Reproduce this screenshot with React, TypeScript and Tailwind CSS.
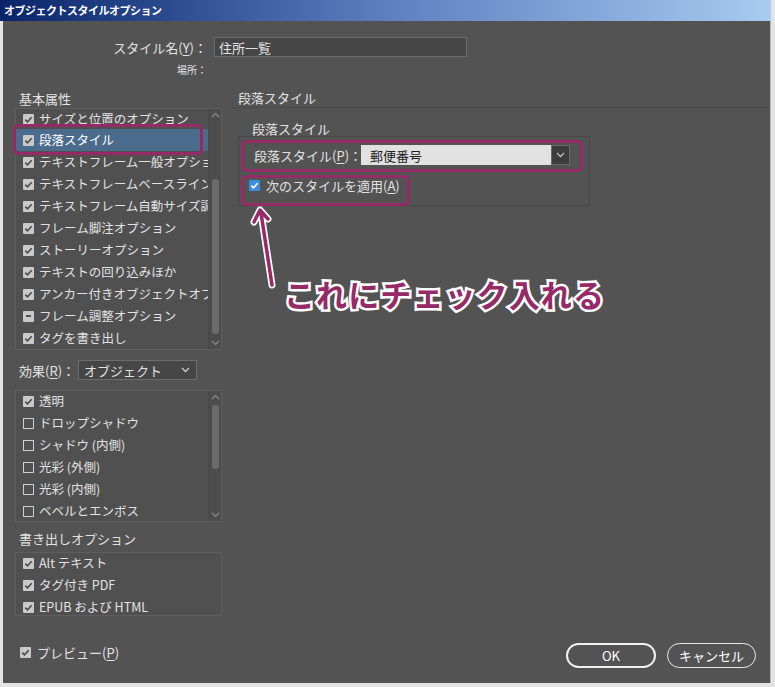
import React from 'react';

type CheckState = 'on' | 'off' | 'mixed' | 'blue';

const Check = ({ state }: { state: CheckState }) => {
  if (state === 'off') {
    return <span className="block w-[11px] h-[11px] shrink-0 border border-[#cfcfcf]" />;
  }
  if (state === 'mixed') {
    return (
      <span className="flex w-[11px] h-[11px] shrink-0 items-center justify-center bg-[#c9c9c9] rounded-[1px]">
        <span className="block w-[5px] h-[2px] bg-[#555]" />
      </span>
    );
  }
  const blue = state === 'blue';
  return (
    <span className={`flex w-[11px] h-[11px] shrink-0 items-center justify-center rounded-[1px] ${blue ? 'bg-[#3b8ede]' : 'bg-[#c9c9c9]'}`}>
      <svg width="11" height="11" viewBox="0 0 11 11">
        <path d="M2.3 5.6 L4.5 7.8 L8.7 3.2" fill="none" stroke={blue ? '#ffffff' : '#4a4a4a'} strokeWidth="1.6" />
      </svg>
    </span>
  );
};

const Row = ({ label, state, selected, h = 'h-[22px]' }: { label: string; state: CheckState; selected?: boolean; h?: string }) => (
  <div className={`flex items-center gap-[5px] pl-[7px] whitespace-nowrap overflow-hidden ${h} ${selected ? 'bg-[#4a6b8b] text-white' : ''}`}>
    <Check state={state} />
    <span>{label}</span>
  </div>
);

const Scrollbar = ({ thumbTop, thumbHeight }: { thumbTop: string; thumbHeight: string }) => (
  <div className="relative w-[13px] shrink-0 border-l border-[#484848] bg-[#4c4c4c]">
    <svg className="absolute top-[3px] left-[2px]" width="9" height="6" viewBox="0 0 9 6">
      <path d="M1 5 L4.5 1.5 L8 5" fill="none" stroke="#8a8a8a" strokeWidth="1.2" />
    </svg>
    <div className={`absolute left-[3px] w-[7px] rounded-[3px] bg-[#6b6b6b] ${thumbTop} ${thumbHeight}`} />
    <svg className="absolute bottom-[3px] left-[2px]" width="9" height="6" viewBox="0 0 9 6">
      <path d="M1 1 L4.5 4.5 L8 1" fill="none" stroke="#8a8a8a" strokeWidth="1.2" />
    </svg>
  </div>
);

const Chevron = ({ color = '#cfcfcf' }: { color?: string }) => (
  <svg width="9" height="6" viewBox="0 0 9 6">
    <path d="M1 1 L4.5 4.5 L8 1" fill="none" stroke={color} strokeWidth="1.3" />
  </svg>
);

const U = ({ children }: { children: React.ReactNode }) => <span className="underline underline-offset-2">{children}</span>;

export default function App() {
  return (
    <div className="w-[775px] h-[687px] bg-[#e4e4e4] flex flex-col text-[#e2e2e2] text-[12.5px] leading-none font-['Noto_Sans_CJK_JP','Noto_Sans',sans-serif]">
      <div className="h-[21px] shrink-0 mr-[4px] flex items-center pl-[4px] bg-linear-to-r from-[#0a246a] via-[#5d7fc0] to-[#a8cbf0] text-white font-bold text-[11px] tracking-[-0.5px]">
        オブジェクトスタイルオプション
      </div>
      <div className="relative flex-1 flex flex-col ml-[3px] mr-[4px] mb-[4px] bg-[#535353] border-r border-[#b8b8b8]">
        <div className="mt-[16px] flex items-center h-[20px]">
          <div className="w-[204px] text-right text-[13px]">
            スタイル名(<U>Y</U>)：
          </div>
          <div className="ml-[7px] w-[253px] h-[20px] flex items-center pl-[4px] bg-[#464646] border border-[#6c6c6c] text-[13px]">
            住所一覧
          </div>
        </div>
        <div className="mt-[6px] h-[14px] flex items-center">
          <div className="w-[204px] text-right text-[10px]">場所：</div>
        </div>

        <div className="mt-[11px] flex flex-1">
          <div className="ml-[12px] w-[207px] flex flex-col">
            <div className="h-[20px] flex items-center pl-[4px] text-[13px]">基本属性</div>
            <div className="h-[242px] flex border border-[#5e5e5e] bg-[#505050]">
              <div className="flex-1 overflow-hidden">
                <Row label="サイズと位置のオプション" state="on" h="h-[20px]" />
                <Row label="段落スタイル" state="on" selected />
                <Row label="テキストフレーム一般オプション" state="on" />
                <Row label="テキストフレームベースラインオプション" state="on" />
                <Row label="テキストフレーム自動サイズ調整オプション" state="on" />
                <Row label="フレーム脚注オプション" state="on" />
                <Row label="ストーリーオプション" state="on" />
                <Row label="テキストの回り込みほか" state="on" />
                <Row label="アンカー付きオブジェクトオプション" state="on" />
                <Row label="フレーム調整オプション" state="mixed" />
                <Row label="タグを書き出し" state="on" />
              </div>
              <Scrollbar thumbTop="top-[70px]" thumbHeight="h-[155px]" />
            </div>

            <div className="mt-[10px] h-[20px] flex items-center pl-[4px] text-[13px]">
              <span>効果(<U>R</U>)：</span>
              <div className="ml-[3px] w-[119px] h-[20px] flex items-center justify-between pl-[5px] pr-[6px] bg-[#464646] border border-[#6c6c6c]">
                <span>オブジェクト</span>
                <Chevron />
              </div>
            </div>

            <div className="mt-[10px] h-[132px] flex border border-[#5e5e5e] bg-[#505050]">
              <div className="flex-1 overflow-hidden">
                <Row label="透明" state="on" h="h-[21px]" />
                <Row label="ドロップシャドウ" state="off" />
                <Row label="シャドウ (内側)" state="off" />
                <Row label="光彩 (外側)" state="off" />
                <Row label="光彩 (内側)" state="off" />
                <Row label="ベベルとエンボス" state="off" />
              </div>
              <Scrollbar thumbTop="top-[14px]" thumbHeight="h-[64px]" />
            </div>

            <div className="mt-[6px] h-[20px] flex items-center pl-[4px] text-[13px]">書き出しオプション</div>
            <div className="mt-[4px] h-[64px] border border-[#5e5e5e] bg-[#505050] pr-[13px]">
              <Row label="Alt テキスト" state="on" h="h-[21px]" />
              <Row label="タグ付き PDF" state="on" />
              <Row label="EPUB および HTML" state="on" />
            </div>

            <div className="mt-[26px] h-[20px] flex items-center gap-[6px] pl-[5px] text-[13px]">
              <Check state="on" />
              <span>プレビュー(<U>P</U>)</span>
            </div>
          </div>

          <div className="ml-[10px] flex-1 flex flex-col">
            <div className="h-[20px] flex items-center pl-[6px] text-[13px] border-b border-[#494949]">段落スタイル</div>
            <div className="mt-[12px] h-[16px] flex items-center pl-[20px] text-[13px]">段落スタイル</div>
            <div className="ml-[6px] w-[352px] h-[70px] border border-[#464646] flex flex-col">
              <div className="mt-[8px] h-[20px] flex items-center pl-[15px] text-[13px]">
                <span className="w-[107px] shrink-0 whitespace-nowrap">段落スタイル(<U>P</U>)：</span>
                <div className="w-[209px] shrink-0 h-[20px] flex bg-[#e1e1e1] text-[#1e1e1e]">
                  <span className="flex-1 flex items-center pl-[9px]">郵便番号</span>
                  <span className="w-[19px] flex items-center justify-center bg-[#3c3c3c] border border-[#6a6a6a]">
                    <Chevron color="#bdbdbd" />
                  </span>
                </div>
              </div>
              <div className="mt-[10px] h-[20px] flex items-center gap-[6px] pl-[10px] text-[13px]">
                <Check state="blue" />
                <span>次のスタイルを適用(<U>A</U>)</span>
              </div>
            </div>

            <div className="mt-auto mb-[15px] pr-[14px] flex justify-end gap-[11px] text-[13px]">
              <button className="w-[90px] h-[25px] rounded-full border-2 border-[#f2f2f2] text-white">OK</button>
              <button className="w-[89px] h-[25px] rounded-full border border-[#e8e8e8] text-white">キャンセル</button>
            </div>
          </div>
        </div>

        <div className="absolute left-[10px] top-[103px] w-[190px] h-[31px] rounded-[6px] border-[3px] border-[#962a66]" />
        <div className="absolute left-[238px] top-[119px] w-[342px] h-[32px] rounded-[6px] border-[3px] border-[#962a66]" />
        <div className="absolute left-[238px] top-[154px] w-[169px] h-[31px] rounded-[6px] border-[3px] border-[#962a66]" />

        <svg className="absolute left-[247px] top-[182px]" width="36" height="90" viewBox="0 0 36 90">
          <g strokeLinecap="round" strokeLinejoin="round" fill="none">
            <path d="M22 82 L11 10 M4 19 L10 7 L18 16" stroke="#ffffff" strokeWidth="7" />
            <path d="M22 82 L11 10 M4 19 L10 7 L18 16" stroke="#962a66" strokeWidth="3.5" />
          </g>
        </svg>

        <div className="absolute left-[281px] top-[257px] text-[31px] leading-none font-bold text-[#962a66] whitespace-nowrap tracking-[1.1px] [-webkit-text-stroke:5px_#ffffff] [paint-order:stroke_fill]">
          これにチェック入れる
        </div>
      </div>
    </div>
  );
}
